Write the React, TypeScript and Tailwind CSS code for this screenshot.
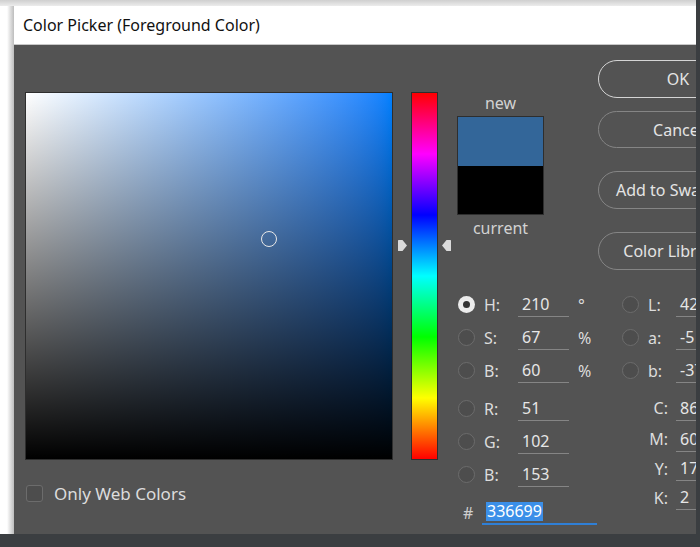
import React from 'react';

const font = { fontFamily: '"Noto Sans", "Open Sans", sans-serif' };

const Radio: React.FC<{ checked?: boolean }> = ({ checked }) =>
  checked ? (
    <div className="w-[17px] h-[17px] rounded-full bg-[#ececec] flex items-center justify-center">
      <div className="w-[7px] h-[7px] rounded-full bg-[#333]" />
    </div>
  ) : (
    <div className="w-[17px] h-[17px] rounded-full border-[1.5px] border-[#6c6c6c] bg-[#4d4d4d]" />
  );

const Field: React.FC<{ value: string; w?: string }> = ({ value, w = 'w-[51px]' }) => (
  <div className={`${w} h-[25px] border-b border-[#858585] pl-[4px] leading-[24px] text-[#e6e6e6] whitespace-nowrap`}>
    {value}
  </div>
);

const HsbRow: React.FC<{ label: string; value: string; unit?: string; checked?: boolean; h?: string }> = ({
  label,
  value,
  unit,
  checked,
  h = 'h-[33px]',
}) => (
  <div className={`flex items-center ${h}`}>
    <div className="ml-[1px] w-[17px]">
      <Radio checked={checked} />
    </div>
    <span className="ml-[9px] w-[34px] text-[#dcdcdc]">{label}</span>
    <Field value={value} />
    <span className="ml-[9px] text-[#dcdcdc]">{unit}</span>
  </div>
);

const LabRow: React.FC<{ label: string; value: string }> = ({ label, value }) => (
  <div className="flex items-center h-[33px]">
    <div className="w-[17px]">
      <Radio />
    </div>
    <span className="ml-[9px] w-[28px] text-[#dcdcdc]">{label}</span>
    <Field value={value} />
  </div>
);

const CmykRow: React.FC<{ label: string; value: string; h: string }> = ({ label, value, h }) => (
  <div className={`flex items-center ${h}`}>
    <span className="w-[47px] text-right pr-[1px] text-[#dcdcdc]">{label}</span>
    <div className="ml-[7px]">
      <Field value={value} />
    </div>
  </div>
);

const Button: React.FC<{ label: string; def?: boolean; h?: string; mt?: string }> = ({ label, def, h = 'h-[38px]', mt = '' }) => (
  <div
    className={`${h} ${mt} w-[160px] rounded-[19px] border-[1.5px] ${
      def ? 'border-[#d4d4d4]' : 'border-[#858585]'
    } flex items-center justify-center text-[16px] text-[#e4e4e4] whitespace-nowrap`}
  >
    {label}
  </div>
);

const Arrow: React.FC<{ flip?: boolean }> = ({ flip }) => (
  <svg width="11" height="13" viewBox="0 0 11 13" className={flip ? 'scale-x-[-1]' : ''}>
    <path d="M1.5 1 H5.5 L10 6.5 L5.5 12 H1.5 Q1 12 1 11.5 V1.5 Q1 1 1.5 1 Z" fill="#dadada" />
  </svg>
);

export default function App() {
  return (
    <div className="w-[700px] h-[547px] flex flex-col bg-white overflow-hidden" style={font}>
      <div className="flex flex-1 min-h-0">
        <div className="w-[696px] flex flex-col">
          <div className="h-[6px] bg-gradient-to-b from-[#cfcfcf] to-[#ececec]" />
          <div className="flex flex-1 min-h-0">
            <div className="w-[14px] bg-gradient-to-r from-white via-white to-[#bdbdbd]" />
            <div className="flex-1 flex flex-col overflow-hidden">
              <div className="h-[39px] bg-white border-b border-[#c8c8c8] flex items-center pl-[9px] text-[16px] text-[#111]">
                Color Picker (Foreground Color)
              </div>
              <div className="flex-1 bg-[#535353] flex pl-[11px] pt-[15px]">
                {/* color field */}
                <div className="mt-[32px] w-[368px] shrink-0">
                  <div className="relative w-[368px] h-[368px] border border-[#2e2e2e] bg-gradient-to-r from-white to-[#0080ff]">
                    <div className="absolute inset-0 bg-gradient-to-b from-transparent to-black" />
                    <div className="absolute left-[235px] top-[138px] w-[16px] h-[16px] rounded-full border-[1.5px] border-[#e8e8e8]" />
                  </div>
                  <div className="mt-[21px] flex items-center">
                    <div className="ml-[1px] w-[17px] h-[17px] rounded-[3px] border-[1.5px] border-[#6c6c6c] bg-[#4d4d4d]" />
                    <span className="ml-[11px] text-[17px] text-[#dcdcdc]">Only Web Colors</span>
                  </div>
                </div>

                {/* hue slider */}
                <div className="mt-[32px] ml-[18px] w-[27px] h-[368px] relative shrink-0">
                  <div className="w-full h-full border border-[#2e2e2e] bg-[linear-gradient(to_bottom,#ff0000,#ff00ff_16.67%,#0000ff_33.33%,#00ffff_50%,#00ff00_66.67%,#ffff00_83.33%,#ff0000)]" />
                  <div className="absolute left-[-14px] top-[147px]">
                    <Arrow />
                  </div>
                  <div className="absolute right-[-14px] top-[147px]">
                    <Arrow flip />
                  </div>
                </div>

                {/* right side */}
                <div className="ml-[19px] flex-1 min-w-0 text-[16px]">
                  <div className="flex">
                    <div className="w-[87px] shrink-0 flex flex-col items-center">
                      <div className="mt-[33px] h-[20px] leading-[20px] text-[#d2d2d2]">new</div>
                      <div className="mt-[3px] w-[87px] border border-[#2e2e2e]">
                        <div className="h-[49px] bg-[#336699]" />
                        <div className="h-[48px] bg-black" />
                      </div>
                      <div className="mt-[3px] h-[20px] leading-[20px] text-[#d2d2d2]">current</div>
                    </div>
                    <div className="ml-[54px] flex flex-col shrink-0">
                      <Button label="OK" def />
                      <Button label="Cancel" mt="mt-[13px]" h="h-[37px]" />
                      <Button label="Add to Swatches" mt="mt-[23px]" />
                      <Button label="Color Libraries" mt="mt-[23px]" />
                    </div>
                  </div>

                  <div className="mt-[18px] flex">
                    <div className="w-[165px] shrink-0">
                      <HsbRow label="H:" value="210" unit="°" checked />
                      <HsbRow label="S:" value="67" unit="%" />
                      <HsbRow label="B:" value="60" unit="%" />
                      <div className="mt-[5px]">
                        <HsbRow label="R:" value="51" />
                        <HsbRow label="G:" value="102" />
                        <HsbRow label="B:" value="153" />
                      </div>
                      <div className="mt-[5px] h-[33px] flex items-center">
                        <span className="ml-[6px] w-[19px] text-[#cfcfcf]">#</span>
                        <div className="w-[115px] h-[25px] border-b-2 border-[#2f7fd6] pl-[4px] flex items-center">
                          <span className="bg-[#3b8fe8] text-white leading-[19px] px-[1px]">336699</span>
                        </div>
                      </div>
                    </div>
                    <div className="shrink-0">
                      <LabRow label="L:" value="42" />
                      <LabRow label="a:" value="-5" />
                      <LabRow label="b:" value="-37" />
                      <div className="mt-[5px]">
                        <CmykRow label="C:" value="86" h="h-[32px]" />
                        <CmykRow label="M:" value="60" h="h-[30px]" />
                        <CmykRow label="Y:" value="17" h="h-[29px]" />
                        <CmykRow label="K:" value="2" h="h-[29px]" />
                      </div>
                    </div>
                  </div>
                </div>
              </div>
            </div>
          </div>
        </div>
        <div className="w-[4px] bg-[#3b3e41]" />
      </div>
      <div className="h-[13px] bg-[#3b3e41]" />
    </div>
  );
}
